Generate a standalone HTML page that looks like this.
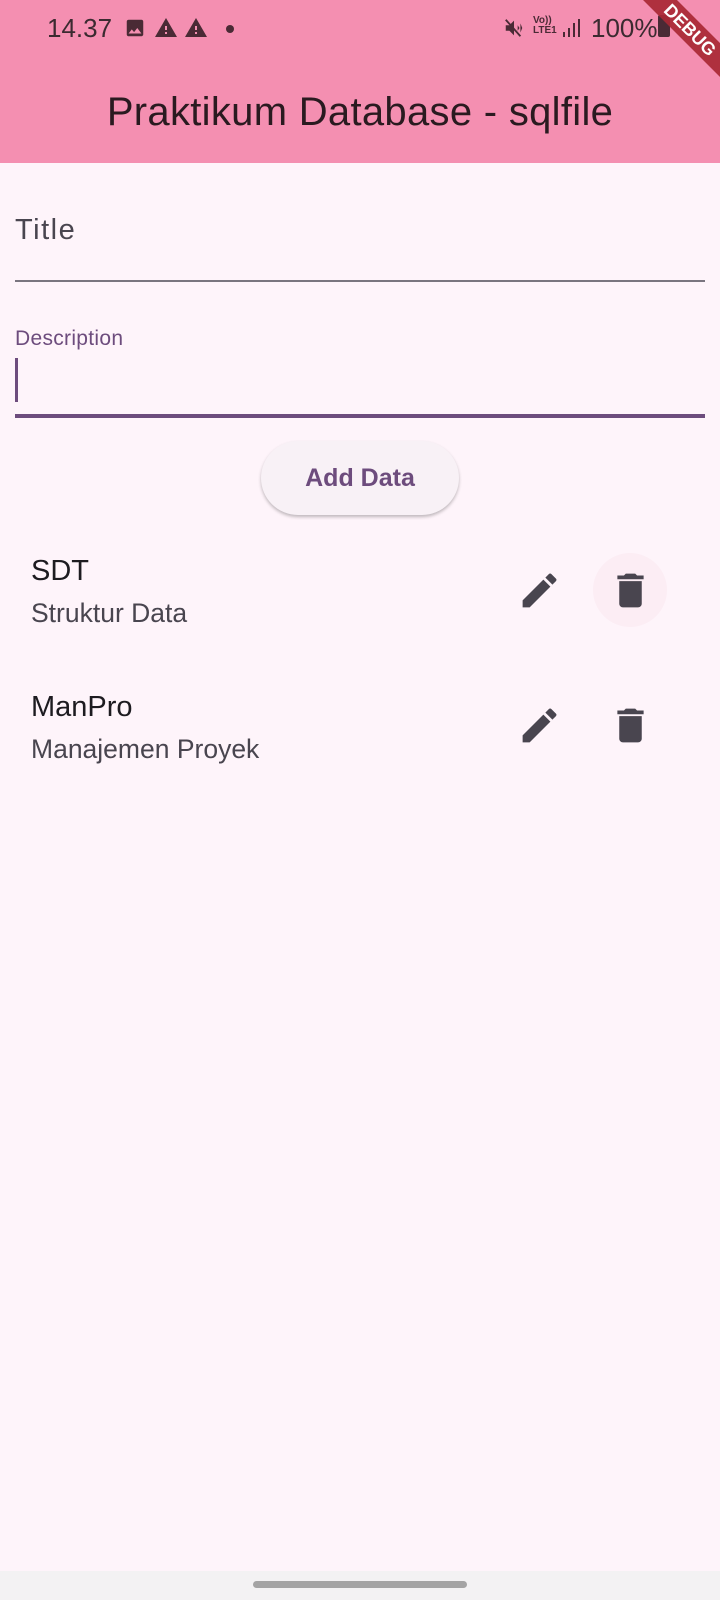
<!DOCTYPE html>
<html><head><meta charset="utf-8">
<style>
*{margin:0;padding:0;box-sizing:border-box}
body{width:720px;height:1600px;background:#fef4fa;font-family:"Liberation Sans",Roboto,sans-serif;position:relative;overflow:hidden;color:#1d1b20}
.abs{position:absolute}
.appbar{left:0;top:0;width:720px;height:163px;background:#f48fb1}
</style></head><body>
<div class="abs appbar"></div>
<div class="abs" style="left:47px;top:12px;font-size:26px;color:#3b2a30;line-height:32px">14.37</div>
<svg class="abs" style="left:124px;top:17px" width="22" height="22" viewBox="0 0 24 24"><path fill="#4a2a35" d="M21 19V5c0-1.1-.9-2-2-2H5c-1.1 0-2 .9-2 2v14c0 1.1.9 2 2 2h14c1.1 0 2-.9 2-2zM8.5 13.5l2.5 3 3.5-4.5 4.5 6H5l3.5-4.5z"/></svg>
<svg class="abs" style="left:154px;top:16px" width="24" height="24" viewBox="0 0 24 24"><path fill="#4a2a35" d="M1 21h22L12 2 1 21zm12-3h-2v-2h2v2zm0-4h-2v-4h2v4z"/></svg>
<svg class="abs" style="left:184px;top:16px" width="24" height="24" viewBox="0 0 24 24"><path fill="#4a2a35" d="M1 21h22L12 2 1 21zm12-3h-2v-2h2v2zm0-4h-2v-4h2v4z"/></svg>
<div class="abs" style="left:226px;top:25px;width:8px;height:8px;border-radius:50%;background:#4a2a35"></div>
<svg class="abs" style="left:503px;top:17px" width="22" height="22" viewBox="0 0 24 24"><path fill="#4a2a35" d="M3 9v6h4l5 5V4L7 9H3zm13 0l2 3-2 3m3-8l2 5-2 5"/><path stroke="#4a2a35" stroke-width="2" d="M3 3l16 18"/></svg>
<div class="abs" style="left:533px;top:16px;font-size:10px;line-height:10px;color:#4a2a35;font-weight:bold">Vo))<br>LTE1</div>
<svg class="abs" style="left:562px;top:18px" width="18" height="20" viewBox="0 0 18 20"><rect x="1" y="14" width="2" height="5" fill="#4a2a35"/><rect x="6" y="10" width="2" height="9" fill="#4a2a35"/><rect x="11" y="5" width="2" height="14" fill="#4a2a35"/><rect x="16" y="1" width="2" height="18" fill="#4a2a35"/></svg>
<div class="abs" style="left:591px;top:12px;font-size:26px;color:#3b2a30;line-height:32px">100%</div>
<div class="abs" style="left:658px;top:15px;width:12px;height:22px;background:#4a2a35;border-radius:2px"></div>
<div class="abs" style="left:600px;top:18px;width:180px;height:24px;background:rgba(168,40,52,0.92);transform:rotate(45deg);color:#fff;font-weight:bold;font-size:18px;text-align:center;line-height:24px">DEBUG</div>
<div class="abs" style="left:0;top:89px;width:720px;text-align:center;font-size:40px;line-height:46px;color:#2a1a20;letter-spacing:0.3px">Praktikum Database - sqlfile</div>

<div class="abs" style="left:15px;top:212px;font-size:29px;color:#49454f;line-height:36px;letter-spacing:1.5px">Title</div>
<div class="abs" style="left:15px;top:280px;width:690px;height:2px;background:#7a757f"></div>
<div class="abs" style="left:15px;top:326px;font-size:21px;color:#6d4c7d;line-height:26px;letter-spacing:0.3px">Description</div>
<div class="abs" style="left:15px;top:358px;width:3px;height:44px;background:#6d4c7d"></div>
<div class="abs" style="left:15px;top:414px;width:690px;height:4px;background:#6d4c7d"></div>

<div class="abs" style="left:261px;top:441px;width:198px;height:74px;border-radius:37px;background:#f8f1f6;box-shadow:0 2px 3px rgba(0,0,0,0.25);text-align:center;line-height:74px;font-size:25px;font-weight:bold;color:#6d4c7d">Add Data</div>

<div class="abs" style="left:31px;top:554px;font-size:29px;line-height:34px">SDT</div>
<div class="abs" style="left:31px;top:598px;font-size:26.5px;line-height:30px;color:#49454f">Struktur Data</div>
<div class="abs" style="left:31px;top:690px;font-size:29px;line-height:34px">ManPro</div>
<div class="abs" style="left:31px;top:734px;font-size:26.5px;line-height:30px;color:#49454f">Manajemen Proyek</div>

<div class="abs" style="left:593px;top:553px;width:74px;height:74px;border-radius:50%;background:#fcedf4"></div>
<svg class="abs" style="left:517px;top:568px" width="45" height="45" viewBox="0 0 24 24"><path fill="#49454f" d="M3 17.25V21h3.75L17.81 9.94l-3.75-3.75L3 17.25zM20.71 7.04a.996.996 0 000-1.41l-2.34-2.34a.996.996 0 00-1.41 0l-1.83 1.83 3.75 3.75 1.83-1.83z"/></svg>
<svg class="abs" style="left:608px;top:568px" width="45" height="45" viewBox="0 0 24 24"><path fill="#49454f" d="M6 19c0 1.1.9 2 2 2h8c1.1 0 2-.9 2-2V7H6v12zM19 4h-3.5l-1-1h-5l-1 1H5v2h14V4z"/></svg>
<svg class="abs" style="left:517px;top:703px" width="45" height="45" viewBox="0 0 24 24"><path fill="#49454f" d="M3 17.25V21h3.75L17.81 9.94l-3.75-3.75L3 17.25zM20.71 7.04a.996.996 0 000-1.41l-2.34-2.34a.996.996 0 00-1.41 0l-1.83 1.83 3.75 3.75 1.83-1.83z"/></svg>
<svg class="abs" style="left:608px;top:703px" width="45" height="45" viewBox="0 0 24 24"><path fill="#49454f" d="M6 19c0 1.1.9 2 2 2h8c1.1 0 2-.9 2-2V7H6v12zM19 4h-3.5l-1-1h-5l-1 1H5v2h14V4z"/></svg>

<div class="abs" style="left:0;top:1571px;width:720px;height:29px;background:#f3f2f3"></div>
<div class="abs" style="left:253px;top:1581px;width:214px;height:7px;border-radius:4px;background:#a4a4a4"></div>
</body></html>
